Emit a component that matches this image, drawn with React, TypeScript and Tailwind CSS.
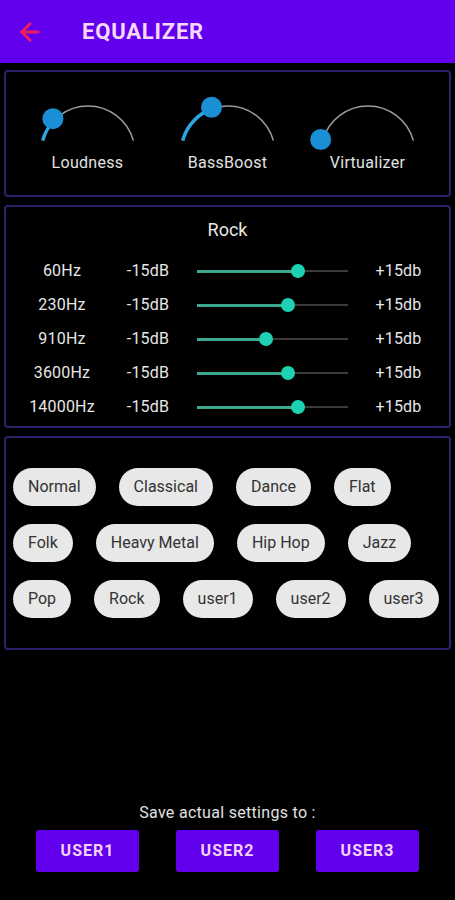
import { ArrowLeft } from "lucide-react";

const knobs = [
  { label: "Loudness", value: 0.2 },
  { label: "BassBoost", value: 0.38 },
  { label: "Virtualizer", value: 0 },
];

const bands = [
  { hz: "60Hz", value: 0.67 },
  { hz: "230Hz", value: 0.6 },
  { hz: "910Hz", value: 0.46 },
  { hz: "3600Hz", value: 0.6 },
  { hz: "14000Hz", value: 0.67 },
];

const presets = [
  "Normal",
  "Classical",
  "Dance",
  "Flat",
  "Folk",
  "Heavy Metal",
  "Hip Hop",
  "Jazz",
  "Pop",
  "Rock",
  "user1",
  "user2",
  "user3",
];

// arc geometry for the rotary knobs
const CX = 60;
const CY = 61;
const R = 47;
const START = 164.6;
const SWEEP = 149.2;

const pt = (deg: number) => {
  const a = (deg * Math.PI) / 180;
  return [CX + R * Math.cos(a), CY - R * Math.sin(a)];
};

const Knob = ({ label, value }: { label: string; value: number }) => {
  const [sx, sy] = pt(START);
  const [ex, ey] = pt(START - SWEEP);
  const [dx, dy] = pt(START - SWEEP * value);
  return (
    <div className="flex w-[140px] flex-col items-center">
      <svg width="120" height="56" viewBox="0 0 120 56" className="overflow-visible">
        <path
          d={`M ${sx} ${sy} A ${R} ${R} 0 0 1 ${ex} ${ey}`}
          fill="none"
          stroke="#9a9a9a"
          strokeWidth="1.5"
        />
        {value > 0 && (
          <path
            d={`M ${sx} ${sy} A ${R} ${R} 0 0 1 ${dx} ${dy}`}
            fill="none"
            stroke="#2ba6de"
            strokeWidth="3.5"
          />
        )}
        <circle cx={dx - 2} cy={dy - 1} r="10.5" fill="#1b8fd6" />
      </svg>
      <span className="mt-[6px] text-[16px] leading-[18px] tracking-[0.3px] text-[#e2e2e2]">{label}</span>
    </div>
  );
};

const Slider = ({ value }: { value: number }) => (
  <div className="relative ml-[19px] h-[16px] w-[151px]">
    <div className="absolute left-0 right-0 top-[7px] h-[2px] bg-[#3a3a3a]" />
    <div
      className="absolute left-0 top-[6.5px] h-[3px] bg-[#3ba98f]"
      style={{ width: `${value * 100}%` }}
    />
    <div
      className="absolute top-[1px] h-[14px] w-[14px] -translate-x-1/2 rounded-full bg-[#1fd1b3]"
      style={{ left: `${value * 100}%` }}
    />
  </div>
);

export default function App() {
  return (
    <div className="flex h-[900px] flex-col bg-black font-['Roboto',sans-serif] text-white">
      <div className="flex h-[63px] items-center bg-[#6200ee]">
        <ArrowLeft className="ml-[16px] text-[#ec1f5a]" size={28} strokeWidth={2.5} />
        <h1 className="ml-[38px] text-[22px] font-bold tracking-[0.8px] text-[#f6d8f6]">EQUALIZER</h1>
      </div>

      <div className="flex flex-col gap-[8px] px-[4px] pt-[7px]">
        <div className="flex h-[127px] justify-center rounded-[4px] border-2 border-[#2c2169] pt-[20px]">
          {knobs.map((k) => (
            <Knob key={k.label} label={k.label} value={k.value} />
          ))}
        </div>

        <div className="h-[223px] rounded-[4px] border-2 border-[#2c2169]">
          <div className="mt-[12px] text-center text-[18px] leading-[22px] text-[#e6e6e6]">Rock</div>
          <div className="mt-[13px] flex flex-col">
            {bands.map((b) => (
              <div key={b.hz} className="flex h-[34px] items-center text-[16px] tracking-[0.2px] text-[#e6e6e6]">
                <span className="w-[112px] text-center">{b.hz}</span>
                <span className="w-[60px] text-center">-15dB</span>
                <Slider value={b.value} />
                <span className="flex-1 text-center">+15db</span>
              </div>
            ))}
          </div>
        </div>

        <div className="h-[214px] rounded-[4px] border-2 border-[#2c2169]">
          <div className="flex flex-wrap gap-x-[23px] gap-y-[18px] pl-[7px] pr-[4px] pt-[30px]">
            {presets.map((p) => (
              <button
                key={p}
                className="h-[38px] rounded-full bg-[#e8e8e8] px-[15px] text-[16px] text-[#333333]"
              >
                {p}
              </button>
            ))}
          </div>
        </div>
      </div>

      <div className="mt-auto flex flex-col items-center pb-[28px]">
        <p className="text-[16px] leading-[18px] tracking-[0.3px] text-[#e0e0e0]">Save actual settings to :</p>
        <div className="mt-[8px] flex gap-[37px]">
          {["USER1", "USER2", "USER3"].map((u) => (
            <button
              key={u}
              className="h-[42px] w-[103px] rounded-[3px] bg-[#6200ee] text-[16px] font-bold tracking-[1px] text-[#f3d3f5]"
            >
              {u}
            </button>
          ))}
        </div>
      </div>
    </div>
  );
}
